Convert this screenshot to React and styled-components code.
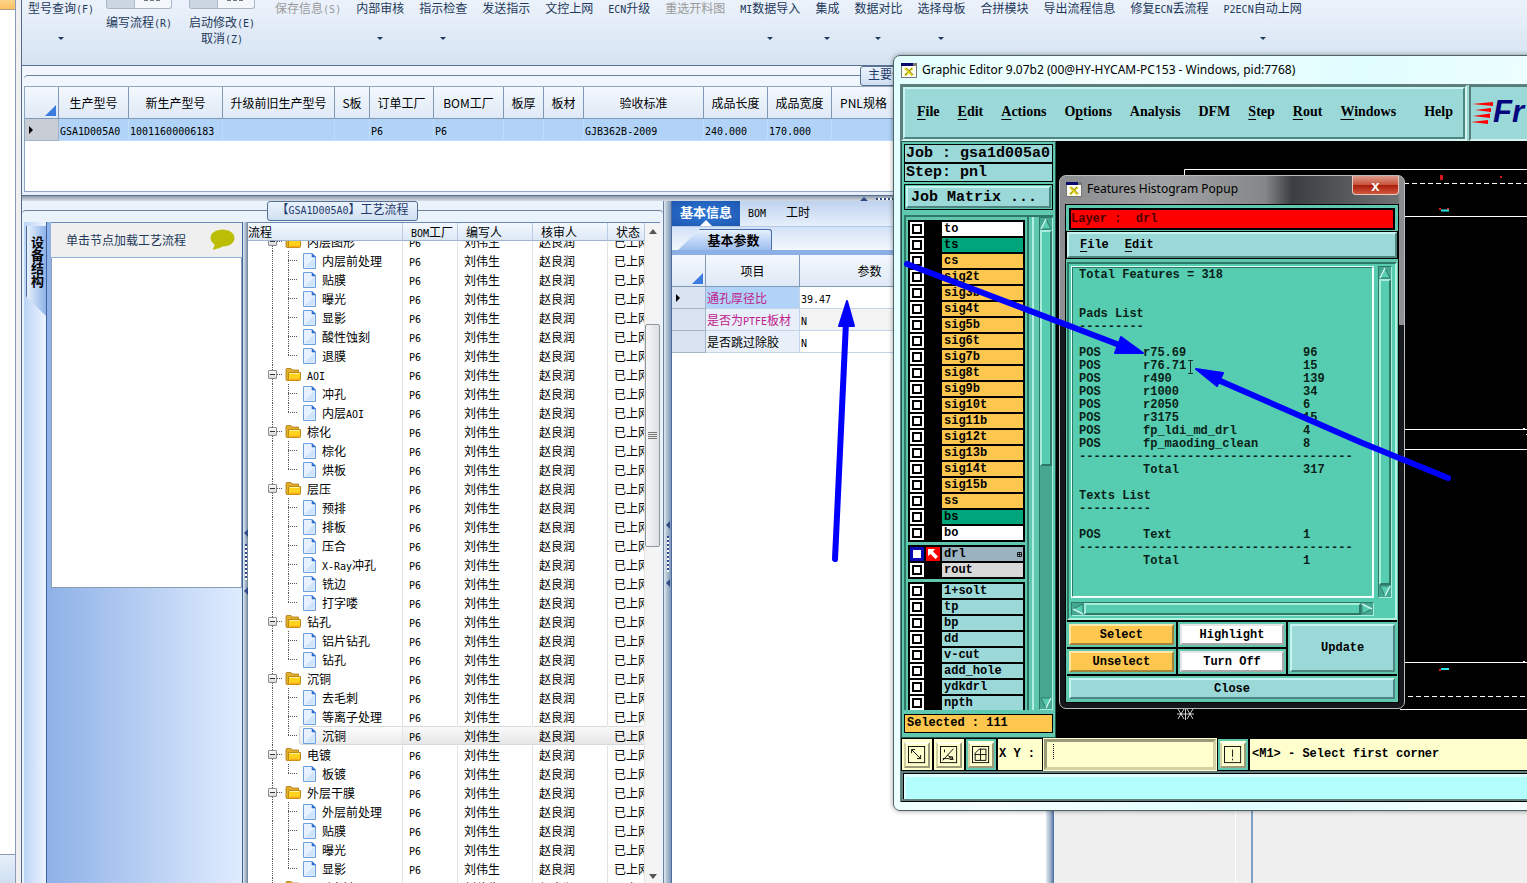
import React from 'react';
import styled, { createGlobalStyle, css } from 'styled-components';

const GlobalStyle = createGlobalStyle`
    * {
        box-sizing: border-box;
    }
    body {
        margin: 0;
        overflow: hidden;
        font-family: "Liberation Sans", "Noto Sans CJK SC", sans-serif;
        font-size: 12px;
        color: #000;
    }
    button, input {
        margin: 0;
        padding: 0;
        border: 0;
        border-radius: 0;
        background: none;
        font: inherit;
        color: inherit;
    }
    table {
        border-collapse: separate;
        border-spacing: 0;
        table-layout: fixed;
    }
    th, td {
        padding: 0;
        text-align: left;
        font-weight: inherit;
        white-space: nowrap;
        overflow: hidden;
    }
`;

/* ---------- mixed chinese / half width text ---------- */

const Half = styled.span`
    font-family: "DejaVu Sans Mono", monospace;
    font-size: 10px;
    line-height: 1;
`;

const Song = ({ children }) =>
    children
        .split(/([\x20-\x7e]+)/)
        .filter(Boolean)
        .map((part, i) => (/^[\x20-\x7e]/.test(part) ? <Half key={i}>{part}</Half> : part));

/* ---------- page ---------- */

const Page = styled.div`
    position: relative;
    display: flex;
    width: 100vw;
    height: 100vh;
    overflow: hidden;
    background: #f0f0f0;
    font-family: "Noto Sans CJK SC", sans-serif;
`;

const Dock = styled.div`
    flex: 0 0 16px;
    display: flex;
    flex-direction: column;
    justify-content: space-between;
    background: #fff;
    border-right: 1px solid #8b9bb3;
`;

const DockActive = styled.div`
    height: 10px;
    background: linear-gradient(#fcd48a, #fdc163);
    border-bottom: 1px solid #a99f84;
`;

const DockFoot = styled.div`
    height: 29px;
    background: linear-gradient(#e6effa, #cfdff2);
    border-top: 1px solid #8b9bb3;
`;

const Main = styled.div`
    flex: 1;
    min-width: 0;
    display: flex;
    flex-direction: column;
    margin-left: 5px;
    border-left: 1px solid #566a88;
`;

/* ---------- ribbon ---------- */

const Ribbon = styled.div`
    flex: 0 0 66px;
    display: flex;
    align-items: flex-start;
    gap: 15px;
    padding-left: 6px;
    background: linear-gradient(#ecf2fb, #d5e3f2);
    border-bottom: 1px solid #5a7090;
`;

const RibbonItem = styled.button`
    flex: 0 0 auto;
    display: flex;
    flex-direction: column;
    align-items: center;
    width: ${p => (p.$width ? `${p.$width}px` : 'auto')};
    color: ${p => (p.disabled ? '#9a9a9a' : '#1e395b')};
    line-height: 16px;
    white-space: nowrap;
`;

const Caret = styled.i`
    margin-top: 21px;
    border: 3px solid transparent;
    border-top-color: #1e395b;
    border-bottom: 0;
`;

const RibbonPicture = styled.span`
    flex: 0 0 auto;
    display: flex;
    justify-content: flex-end;
    width: 66px;
    height: 9px;
    margin-bottom: 5px;
    background: linear-gradient(90deg, #ccd6e1 27px, #aebccd 27px, #aebccd 28px, #f3f7fc 28px);
    border: 1px solid #a9b6c6;
    border-top: 0;
    border-radius: 0 0 3px 3px;
`;

const RibbonDashes = styled.span`
    width: 16px;
    height: 1px;
    margin-right: 11px;
    background: repeating-linear-gradient(90deg, #6c7684 0 4px, transparent 4px 6px);
`;

const ribbonItems = [
    { text: '型号查询(F)', caret: true },
    { text: '编写流程(R)', picture: true, width: 60 },
    { text: '启动修改(E)', second: '取消(Z)', picture: true, width: 76 },
    { text: '保存信息(S)', disabled: true },
    { text: '内部审核', caret: true },
    { text: '指示检查', caret: true },
    { text: '发送指示' },
    { text: '文控上网' },
    { text: 'ECN升级' },
    { text: '重选开料图', disabled: true },
    { text: 'MI数据导入', caret: true },
    { text: '集成', caret: true },
    { text: '数据对比', caret: true },
    { text: '选择母板', caret: true },
    { text: '合拼模块' },
    { text: '导出流程信息' },
    { text: '修复ECN丢流程' },
    { text: 'P2ECN自动上网', caret: true },
];

/* ---------- group panels ---------- */

const Legend = styled.div`
    flex: 0 0 ${p => p.$height}px;
    display: flex;
    color: #1f3a6b;
`;

const LegendLine = styled.div`
    flex: ${p => p.$flex || '1'};
    height: 11px;
    margin-top: 9px;
    border-top: 1px solid #6d819c;
    border-top-left-radius: ${p => (p.$left ? 4 : 0)}px;
    border-top-right-radius: ${p => (p.$right ? 4 : 0)}px;
`;

const LegendTab = styled.div`
    width: ${p => p.$width}px;
    height: 20px;
    padding: 0 6px;
    line-height: 14px;
    text-align: center;
    white-space: nowrap;
    background: linear-gradient(#eaf3fd, #cfdff2);
    border: 1px solid #566f92;
    border-radius: 3px;
`;

const TopPanel = styled.section`
    flex: 0 0 130px;
    display: flex;
    flex-direction: column;
    padding: 0 2px 3px;
    background: linear-gradient(#f2f7fd, #e6effa);
    border-bottom: 1px solid #566f92;
`;

const GridBox = styled.div`
    flex: 1;
    min-height: 0;
    background: #fff;
    border: 1px solid #8fa6c2;
`;

const Grid = styled.table`
    width: 100%;
`;

const HeadCell = styled.th`
    height: 32px;
    text-align: center;
    background: linear-gradient(#f4f8fd, #dfe9f6);
    border-right: 1px solid #7f99b8;
    border-bottom: 1px solid #7f99b8;
`;

const CornerCell = styled(HeadCell)`
    vertical-align: bottom;
    text-align: right;
    line-height: 0;
`;

const Corner = styled.i`
    display: inline-block;
    width: 0;
    height: 0;
    margin: 0 2px 2px 0;
    border-left: 11px solid transparent;
    border-bottom: 11px solid #3b7be0;
`;

const Cell = styled.td`
    height: 22px;
    padding-left: 1px;
    line-height: 20px;
    color: ${p => p.$color || '#000'};
    background: ${p => p.$bg || '#b0d3f7'};
    border-right: 1px solid ${p => p.$line || '#bfdcfa'};
    border-bottom: 1px solid ${p => p.$line || '#bfdcfa'};
`;

const IndicatorCell = styled(Cell)`
    padding-left: 4px;
    background: ${p => p.$bg || '#c8ccd4'};
    border-color: #a3b4ca;
`;

const Pointer = styled.i`
    display: block;
    width: 0;
    height: 0;
    border: 4px solid transparent;
    border-left-color: #000;
    border-right: 0;
`;

const HSplitter = styled.div`
    flex: 0 0 5px;
    display: flex;
    align-items: center;
    gap: 8px;
    padding-left: 838px;
    background: linear-gradient(#8f9aa8, #d5dde6);
`;

const UpMark = styled.i`
    border: 4px solid transparent;
    border-bottom-color: #2f4a86;
    border-top: 0;
`;

const HDots = styled.i`
    width: 60px;
    height: 2px;
    background: repeating-linear-gradient(90deg, #2f4a86 0 2px, #fff 2px 4px);
`;

const Lower = styled.div`
    flex: 1;
    min-height: 0;
    display: flex;
`;

const VSplitter = styled.div`
    flex: 0 0 ${p => p.$width}px;
    display: flex;
    flex-direction: column;
    align-items: center;
    gap: 7px;
    padding-top: ${p => p.$top}px;
    background: linear-gradient(90deg, #dfe9f2, #a9bccd 50%, ${p => p.$end});
`;

const LeftMark = styled.i`
    border: 4px solid transparent;
    border-right-color: #2f4a86;
    border-left: 0;
`;

const VDots = styled.i`
    width: 2px;
    height: 36px;
    background: repeating-linear-gradient(#2f4a86 0 2px, #fff 2px 4px);
`;

const Marks = () => (
    <>
        <LeftMark />
        <VDots />
        <LeftMark />
    </>
);

/* ---------- process panel ---------- */

const ProcessPanel = styled.section`
    flex: 0 0 642px;
    display: flex;
    flex-direction: column;
    background: #eaf2fc;
    border-right: 1px solid #6d819c;
`;

const ProcessBody = styled.div`
    flex: 1;
    min-height: 0;
    display: flex;
    padding: 0 3px 0 2px;
`;

const SideTabs = styled.div`
    flex: 0 0 22px;
    padding: 4px 0 0 2px;
    background: linear-gradient(90deg, #bcd4f7, #edf4fe);
`;

const SideTab = styled.button`
    display: flex;
    align-items: flex-end;
    width: 20px;
    height: 90px;
    padding: 10px 0 0 3px;
    font-size: 13px;
    font-weight: bold;
    line-height: 14px;
    writing-mode: vertical-rl;
    background: linear-gradient(90deg, #e8f1fd, #8db2e8);
    border-left: 1px solid #4a6a9c;
    clip-path: polygon(0 0, 100% 0, 100% 100%, 0 78%);
`;

const Structure = styled.div`
    flex: 0 0 197px;
    padding-left: 4px;
    background: linear-gradient(90deg, #8eb1e7, #dfecfe);
    border-left: 1px solid #3f639c;
    border-right: 1px solid #3f639c;
`;

const StructureHead = styled.div`
    display: flex;
    align-items: center;
    justify-content: space-between;
    height: 36px;
    padding: 0 7px 2px 15px;
    color: #1e395b;
    background: #efefef;
    border-top: 1px solid #6a8ab8;
    border-bottom: 1px solid #8fb0d8;
`;

const StructureBox = styled.div`
    height: 330px;
    background: #fff;
    border: 1px solid #8d9db5;
    border-top: 0;
`;

const TreeArea = styled.div`
    flex: 1;
    min-width: 0;
    display: flex;
    background: #fff;
    border-top: 1px solid #6a8ab8;
`;

const TreeScroll = styled.div`
    flex: 1;
    min-width: 0;
    overflow: hidden;
`;

const Tree = styled.table`
    width: 100%;
`;

const TreeHead = styled.th`
    position: sticky;
    top: 0;
    z-index: 1;
    height: 18px;
    padding-left: ${p => p.$pad}px;
    line-height: 16px;
    background: linear-gradient(#f3f8fe, #dde8f5);
    border-right: 1px solid #b9cbe2;
    border-bottom: 1px solid #9db4d2;
`;

const TreeCell = styled.td`
    height: 19px;
    padding-left: ${p => p.$pad || 0}px;
    line-height: 17px;
    text-overflow: clip;
    border-right: 1px solid #e3e3e3;
    ${p => p.$selected && css`
        background: linear-gradient(#fafafa, #e6e6e6);
        border-right-color: transparent;
        box-shadow: inset 0 1px #d9d9d9, inset 0 -1px #d9d9d9;
    `}
`;

const dots = '#555 0 1px, transparent 1px 2px';

const Node = styled.div`
    display: flex;
    align-items: center;
    height: 19px;
`;

const Trunk = styled.span`
    display: flex;
    align-items: center;
    justify-content: flex-end;
    width: 29px;
    height: 19px;
    background: repeating-linear-gradient(${dots}) 24px 0 / 1px 100% no-repeat;
`;

const Toggle = styled.button`
    width: 9px;
    height: 9px;
    background: linear-gradient(#333, #333) center / 5px 1px no-repeat, linear-gradient(#fff, #d8d8d8);
    border: 1px solid #8c8c8c;
    border-radius: 1px;
`;

const Dash = styled.span`
    width: 8px;
    height: 1px;
    background: repeating-linear-gradient(90deg, ${dots}) 0 0 / 5px 1px no-repeat;
`;

const Branch = styled.span`
    width: 22px;
    height: 19px;
    background:
        repeating-linear-gradient(${dots}) 11px 0 / 1px ${p => (p.$last ? '10px' : '100%')} no-repeat,
        repeating-linear-gradient(90deg, ${dots}) 11px 9px / 10px 1px no-repeat;
`;

const NodeText = styled.span`
    flex: 1;
    display: flex;
    align-items: center;
    gap: 5px;
    height: 19px;
    padding-left: ${p => (p.$leaf ? 3 : 0)}px;
    ${p => p.$selected && css`
        background: linear-gradient(#fdfdfd, #eaeaea);
        border: 1px solid #d9d9d9;
        border-right: 0;
        border-radius: 3px 0 0 3px;
        padding-left: 2px;
    `}
`;

const NodeLabel = styled.span`
    line-height: 17px;
`;

const ScrollBar = styled.div`
    flex: 0 0 15px;
    display: flex;
    flex-direction: column;
    align-items: center;
    background: #f4f4f4;
`;

const ScrollArrow = styled.i`
    margin: ${p => (p.$down ? 'auto 0 4px' : '6px 0 90px')};
    border: 4px solid transparent;
    ${p => (p.$down
        ? 'border-top: 5px solid #555; border-bottom: 0;'
        : 'border-bottom: 5px solid #555; border-top: 0;')}
`;

const ScrollThumb = styled.div`
    display: flex;
    align-items: center;
    justify-content: center;
    width: 15px;
    height: 223px;
    background: linear-gradient(90deg, #f7f7f7, #dcdfe4);
    border: 1px solid #8f979f;
    border-radius: 2px;
`;

const Grip = styled.i`
    width: 9px;
    height: 7px;
    background: repeating-linear-gradient(#777 0 1px, transparent 1px 2px);
`;

const FolderIcon = () => (
    <svg width="17" height="15" viewBox="0 0 17 15">
        <path d="M1 2.5Q1 1.5 2 1.5H6L7.500 3H13.500V6H4V13.500H2Q1 13.500 1 12.500Z" fill="#e0ae2c" stroke="#a97a14" strokeWidth=".8" />
        <path d="M3.500 5.500H15.500V12.500Q15.500 13.500 14.500 13.500H3.500Z" fill="#ffd21c" stroke="#c08a12" />
        <path d="M4.500 6.500H14.500" stroke="#fff2a0" />
        <path d="M5 12.500H15" stroke="#f8a81c" strokeWidth="1.500" />
    </svg>
);

const PageIcon = () => (
    <svg width="15" height="16" viewBox="0 0 15 16">
        <path d="M1.500 .5H10L13.500 4V15.500H1.500Z" fill="#e7f2fe" stroke="#6da0de" />
        <path d="M3 14L12.500 5V14.500H3Z" fill="#cfe4fb" />
        <path d="M10 .5V4H13.500Z" fill="#2d6fd2" stroke="#2d6fd2" strokeWidth=".6" />
    </svg>
);

const BubbleIcon = () => (
    <svg width="25" height="21" viewBox="0 0 25 21">
        <path d="M12.500 0.500C19 .5 24.500 4 24.500 9S19 17.500 12.500 17.500C10.500 18.500 6 20.500 2.500 20.500C4 18.500 4.500 17 4.500 15.500C2 13.800 .5 11.500 .5 9C.5 4 6 .5 12.500 .5Z" fill="#bcbe05" />
    </svg>
);

const processes = [
    ['内层图形', ['内层前处理', '贴膜', '曝光', '显影', '酸性蚀刻', '退膜']],
    ['AOI', ['冲孔', '内层AOI']],
    ['棕化', ['棕化', '烘板']],
    ['层压', ['预排', '排板', '压合', 'X-Ray冲孔', '铣边', '打字喽']],
    ['钻孔', ['铝片钻孔', '钻孔']],
    ['沉铜', ['去毛刺', '等离子处理', '沉铜']],
    ['电镀', ['板镀']],
    ['外层干膜', ['外层前处理', '贴膜', '曝光', '显影']],
    ['图形电镀', []],
];

const treeRows = processes.flatMap(([name, steps]) => [
    { name },
    ...steps.map((step, i) => ({
        name: step,
        leaf: true,
        last: i === steps.length - 1,
        selected: name === '沉铜' && step === '沉铜',
    })),
]);

const scrollTree = el => {
    if (el) el.scrollTop = 9;
};

const ProcessTree = () => (
    <TreeArea>
        <TreeScroll ref={scrollTree}>
            <Tree>
                <colgroup>
                    <col width="155" />
                    <col width="55" />
                    <col width="75" />
                    <col width="75" />
                    <col />
                </colgroup>
                <thead>
                    <tr>
                        <TreeHead $pad={0}>流程</TreeHead>
                        <TreeHead $pad={8}><Song>BOM工厂</Song></TreeHead>
                        <TreeHead $pad={8}>编写人</TreeHead>
                        <TreeHead $pad={8}>核审人</TreeHead>
                        <TreeHead $pad={8}>状态</TreeHead>
                    </tr>
                </thead>
                <tbody>
                    {treeRows.map((row, i) => (
                        <tr key={i}>
                            <TreeCell>
                                <Node>
                                    <Trunk>{!row.leaf && <Toggle aria-label={row.name} />}</Trunk>
                                    {row.leaf ? <Branch $last={row.last} /> : <Dash />}
                                    <NodeText $leaf={row.leaf} $selected={row.selected}>
                                        {row.leaf ? <PageIcon /> : <FolderIcon />}
                                        <NodeLabel><Song>{row.name}</Song></NodeLabel>
                                    </NodeText>
                                </Node>
                            </TreeCell>
                            <TreeCell $pad={6} $selected={row.selected}><Half>P6</Half></TreeCell>
                            <TreeCell $pad={6} $selected={row.selected}>刘伟生</TreeCell>
                            <TreeCell $pad={6} $selected={row.selected}>赵良润</TreeCell>
                            <TreeCell $pad={6} $selected={row.selected}>已上网</TreeCell>
                        </tr>
                    ))}
                </tbody>
            </Tree>
        </TreeScroll>
        <ScrollBar>
            <ScrollArrow />
            <ScrollThumb><Grip /></ScrollThumb>
            <ScrollArrow $down />
        </ScrollBar>
    </TreeArea>
);

/* ---------- parameter panel ---------- */

const ParamPanel = styled.section`
    flex: 0 0 375px;
    background: #fff;
    border-left: 1px solid #4d6a9a;
`;

const ParamTabs = styled.div`
    display: flex;
    height: 26px;
    background: linear-gradient(#bfd3ee, #e6effb);
    border-bottom: 1px solid #b4c9e6;
`;

const ParamTab = styled.button`
    position: relative;
    padding: 0 ${p => p.$pad}px 4px;
    ${p => p.$active && css`
        width: 68px;
        padding: 0 0 4px;
        color: #fff;
        font-size: 13px;
        font-weight: bold;
        background: radial-gradient(#2f7ad6, #1c55b0);
        &::after {
            content: "";
            position: absolute;
            left: 28px;
            bottom: 0;
            border: 6px solid transparent;
            border-bottom-color: #fff;
            border-top: 0;
        }
    `}
`;

const SubTabs = styled.div`
    height: 28px;
    padding: 2px 0 0 6px;
    background: linear-gradient(#d3e2f8, #f4f8fe);
    border-bottom: 5px solid #8cb0e6;
`;

const SubTab = styled.button`
    display: block;
    width: 94px;
    height: 21px;
    padding-left: 18px;
    font-size: 13px;
    font-weight: bold;
    line-height: 18px;
    background: linear-gradient(#e6f0fd, #9dbdee);
    border-top: 1px solid #4a6fa8;
    border-right: 1px solid #4a6fa8;
    border-radius: 0 3px 0 0;
    clip-path: polygon(22px 0, 100% 0, 100% 100%, 0 100%);
`;

const EmptyPanel = styled.div`
    flex: 1;
    display: flex;
    background: #efefef;
`;

const EmptyColumn = styled.div`
    flex: 0 0 ${p => p.$width}px;
    border-right: ${p => p.$line};
`;

/* ---------- motif style windows ---------- */

const mono = css`
    font-family: "Liberation Mono", monospace;
    font-size: 12px;
    font-weight: bold;
`;

const raised = css`
    border: 2px solid;
    border-color: ${p => p.$light || '#c6f4f0'} ${p => p.$dark || '#4d8580'} ${p => p.$dark || '#4d8580'} ${p => p.$light || '#c6f4f0'};
`;

const sunken = css`
    border: 2px solid;
    border-color: #587c7a #d5f3ef #d5f3ef #587c7a;
`;

const Win = styled.div`
    position: absolute;
    left: 893px;
    right: -16px;
    top: 55px;
    bottom: 72px;
    display: flex;
    flex-direction: column;
    padding: 0 8px 8px 6px;
    background: linear-gradient(100deg, #e2ffff, #f6ffff 30%, #e0fdff 60%, #f8ffff);
    border: 1px solid #4c6668;
    border-radius: 7px;
    box-shadow: 0 0 5px rgba(0, 0, 0, 0.4);
`;

const TitleBar = styled.div`
    flex: 0 0 28px;
    display: flex;
    align-items: center;
    gap: 5px;
    padding-left: 1px;
    font-family: "Noto Sans", "Open Sans", sans-serif;
    font-size: 12px;
    line-height: 20px;
    white-space: nowrap;
`;

const WindowIcon = () => (
    <svg width="16" height="15" viewBox="0 0 16 15">
        <rect x=".5" y=".5" width="15" height="14" fill="#fffef2" stroke="#777" />
        <rect width="12" height="3" fill="#08086c" />
        <rect x="12" width="4" height="3" fill="#777" />
        <path d="M4 5L11.500 12.500M11.500 5L4 12.500" stroke="#dfd21a" strokeWidth="2.200" />
        <path d="M5.500 5L12.500 12M11 5L8.500 7.500M6.500 9.500L4 12" stroke="#67631a" strokeWidth=".7" />
    </svg>
);

const WinBody = styled.div`
    flex: 1;
    min-height: 0;
    display: flex;
    flex-direction: column;
    background: #000;
    border: 1px solid #62807f;
`;

const MenuRow = styled.div`
    flex: 0 0 56px;
    display: flex;
    gap: 2px;
    background: #9bd9d9;
`;

const MenuFrame = styled.div`
    flex: 0 0 566px;
    display: flex;
    ${sunken}
`;

const Menu = styled.nav`
    flex: 1;
    display: flex;
    align-items: center;
    gap: 18px;
    padding: 0 10px 2px 12px;
    font-family: "Liberation Serif", serif;
    font-size: 14px;
    font-weight: bold;
    ${raised}
`;

const MenuItem = styled.button`
    margin-left: ${p => (p.$last ? 'auto' : 0)};
    u {
        text-underline-offset: 3px;
    }
`;

const LogoFrame = styled.div`
    flex: 1;
    display: flex;
    align-items: center;
    overflow: hidden;
    ${sunken}
`;

const LogoText = styled.span`
    padding-bottom: 2px;
    font-family: "Liberation Sans", sans-serif;
    font-size: 31px;
    font-weight: bold;
    font-style: italic;
    color: #06067e;
`;

const SpeedLines = () => (
    <svg width="22" height="24" viewBox="0 0 22 24">
        <path d="M1 3L22 1V5ZM4 9L20 7V11ZM2 15L19 12.500V17ZM0 21L17 19V23Z" fill="#f00" />
    </svg>
);

const Work = styled.div`
    flex: 1;
    min-height: 0;
    display: flex;
`;

const JobPanel = styled.aside`
    flex: 0 0 155px;
    display: flex;
    flex-direction: column;
    padding: 2px 2px 4px;
    background: #5fc8ae;
    border: 1px solid #26564c;
`;

const JobLine = styled.div`
    flex: 0 0 19px;
    padding-left: 1px;
    font-family: "Liberation Mono", monospace;
    font-size: 15px;
    font-weight: bold;
    line-height: 17px;
    background: #9bd9d9;
    border: 1px solid #000;
    white-space: nowrap;
    overflow: hidden;
`;

const MatrixFrame = styled.div`
    flex: 0 0 26px;
    display: flex;
    margin: 2px 0 5px;
    padding: 1px;
    border: 1px solid #000;
`;

const MatrixButton = styled.button`
    flex: 1;
    padding-left: 3px;
    font-family: "Liberation Mono", monospace;
    font-size: 15px;
    font-weight: bold;
    text-align: left;
    line-height: 17px;
    background: #9bd9d9;
    ${raised}
`;

const LayerArea = styled.div`
    flex: 1;
    min-height: 0;
    display: flex;
    padding-left: 2px;
    border-top: 2px solid #2e7866;
    border-left: 2px solid #2e7866;
`;

const LayerList = styled.div`
    flex: 0 0 117px;
    display: flex;
    flex-direction: column;
    gap: 3px;
    padding-top: 3px;
    overflow: hidden;
`;

const LayerGroup = styled.div`
    flex: 0 0 auto;
    background: #000;
    border: 1px solid #000;
`;

const LayerRow = styled.label`
    display: flex;
    align-items: center;
    gap: 2px;
    height: 16px;
    padding: 0 1px;
`;

const LayerCheck = styled.input`
    appearance: none;
    width: 14px;
    height: 14px;
    background: #fff;
    border: 2px solid #fff;
    box-shadow: inset 0 0 0 2px #000;
    &:checked {
        border-color: #0a0ab4;
        box-shadow: inset 0 0 0 1px #0a0ab4;
    }
`;

const LayerSlot = styled.span`
    display: flex;
    width: 14px;
    height: 14px;
    background: ${p => (p.$on ? '#f00' : '#000')};
`;

const LayerName = styled.span`
    ${mono}
    flex: 1;
    display: flex;
    align-items: center;
    justify-content: space-between;
    height: 14px;
    padding: 0 1px 0 2px;
    line-height: 13px;
    background: ${p => p.$bg};
`;

const Furrow = styled.div`
    flex: 0 0 10px;
    margin: 0 2px;
    background: linear-gradient(90deg, #2e7866 2px, #5fc8ae 2px, #5fc8ae 5px, #b4f0e0 5px, #b4f0e0 7px, #5fc8ae 7px);
`;

const Trough = styled.div`
    flex: 0 0 14px;
    display: flex;
    flex-direction: ${p => (p.$row ? 'row' : 'column')};
    align-items: stretch;
    background: #45a78f;
    border: 1px solid;
    border-color: #2e7866 #a8ecdb #a8ecdb #2e7866;
`;

const Thumb = styled.div`
    flex: ${p => p.$size};
    background: #56cdb0;
    border: 2px solid;
    border-color: #a8ecdb #2e7866 #2e7866 #a8ecdb;
`;

const turns = { up: 0, right: 90, down: 180, left: 270 };

const Tri = ({ dir }) => (
    <svg width="12" height="12" viewBox="0 0 12 12">
        <g transform={`rotate(${turns[dir]} 6 6)`}>
            <path d="M6 1L11 11H1Z" fill="#56cdb0" stroke="#2e7866" />
            <path d="M6 1L1 11" stroke="#c9f7ea" strokeWidth="1.500" />
        </g>
    </svg>
);

const Spring = styled.div`
    flex: 1;
`;

const Selected = styled.div`
    ${mono}
    flex: 0 0 19px;
    margin-top: 4px;
    padding-left: 2px;
    line-height: 16px;
    background: #fdc64f;
    border: 1px solid #000;
`;

const Canvas = styled.div`
    flex: 1;
    min-width: 0;
    overflow: hidden;
    background: #000;
`;

const CanvasDrawing = () => (
    <svg width="471" height="597" viewBox="1056 141 471 597" fill="none" stroke="#fff">
        <path d="M1527 169.500H1184.500V175M1404 216.500H1527M1405 429.500H1527M1405 449.500H1527M1405 662.500H1527M1400 709.500H1527" />
        <path d="M1404 183.500H1527M1408 696.500H1527" strokeDasharray="5 3" />
        <path d="M1523 428.500H1525M1526 434.500H1527M1523 661.500H1525" />
        <path d="M1440 175H1443V180H1440ZM1500 176H1502V178H1500ZM1439 208H1441V210H1439ZM1447 208H1449V210H1447ZM1439 669H1441V671H1439Z" fill="#d81818" stroke="none" />
        <path d="M1441 210.500H1449M1441 669H1449" stroke="#2ee6e6" strokeWidth="2" />
        <path d="M1177 714H1194M1185.500 708V720M1178 709L1184 719M1184 709L1178 719M1187 709L1193 719M1193 709L1187 719" strokeWidth=".8" />
    </svg>
);

const ToolRow = styled.div`
    flex: 0 0 33px;
    display: flex;
    align-items: stretch;
    gap: 2px;
    padding: 1px 0 1px 1px;
    background: #000;
`;

const ToolButton = styled.button`
    flex: 0 0 30px;
    display: flex;
    align-items: center;
    justify-content: center;
    background: #ffffcd;
    border: 2px solid ${p => (p.$on ? '#5fc8ae' : '#ffffcd')};
    svg {
        padding: 2px;
        border: 2px solid;
        border-color: #fffff0 #9c9a78 #9c9a78 #d3d1a5;
    }
`;

const XYLabel = styled.label`
    ${mono}
    flex: 0 0 44px;
    padding-left: 1px;
    line-height: 30px;
    background: #ffffcd;
    white-space: nowrap;
`;

const XYInput = styled.input`
    ${mono}
    flex: 0 0 172px;
    padding-left: 4px;
    background: #ffffcd;
    border: 3px solid;
    border-color: #9c9a78 #d3d1a5 #d3d1a5 #9c9a78;
    outline: 1px solid #ffffcd;
`;

const Message = styled.div`
    ${mono}
    flex: 1;
    padding-left: 2px;
    line-height: 30px;
    background: #ffffcd;
    white-space: nowrap;
    overflow: hidden;
`;

const StatusBar = styled.div`
    flex: 0 0 30px;
    background: #b3fffd;
    border: 2px solid;
    border-color: #62807f #b3fffd #62807f #62807f;
    box-shadow: inset 1px 1px #000, inset 3px 4px #dbfffe, 0 1px #000;
`;

const layerGroups = [
    [
        ['to', '#fff'],
        ['ts', '#00a57c'],
        ...['cs', 'sig2t', 'sig3b', 'sig4t', 'sig5b', 'sig6t', 'sig7b', 'sig8t', 'sig9b', 'sig10t', 'sig11b',
            'sig12t', 'sig13b', 'sig14t', 'sig15b', 'ss'].map(name => [name, '#fdc64f']),
        ['bs', '#00a57c'],
        ['bo', '#fff'],
    ],
    [
        ['drl', '#9bb3bf'],
        ['rout', '#d9d9d9'],
    ],
    ['1+solt', 'tp', 'bp', 'dd', 'v-cut', 'add_hole', 'ydkdrl', 'npth'].map(name => [name, '#9bd9d9']),
];

const menuItems = [
    ['F', 'ile'], ['E', 'dit'], ['A', 'ctions'], ['p', 'tions', 'O'], ['', 'Analysis'], ['', 'DFM'],
    ['S', 'tep'], ['R', 'out'], ['W', 'indows'], ['', 'Help'],
];

const ToolGlyph = ({ d }) => (
    <svg width="26" height="26" viewBox="0 0 20 20" fill="none" stroke="#000">
        <rect x=".5" y=".5" width="18" height="18" />
        <path d={d} />
    </svg>
);

/* ---------- histogram popup ---------- */

const Popup = styled.div`
    position: absolute;
    left: 1059px;
    top: 175px;
    width: 346px;
    display: flex;
    flex-direction: column;
    padding: 0 5px 5px;
    background: linear-gradient(#8d8f90, #898b8c 5%, #8f9192 28%, #16191d 28%, #14161b);
    border: 1px solid #b9bdbf;
    border-radius: 7px;
`;

const PopupTitle = styled(TitleBar)`
    align-items: flex-start;
    padding: 3px 0 0 1px;
    background: linear-gradient(90deg, #8b8d8e, #a0a2a3 30%, #848687 60%, #3b3e42 68%, #707274);
    svg {
        margin-top: 3px;
    }
`;

const CloseX = styled.button`
    width: 47px;
    height: 19px;
    margin: -3px 0 0 auto;
    color: #fff;
    font-family: "Liberation Sans", sans-serif;
    font-size: 15px;
    font-weight: bold;
    line-height: 15px;
    background: linear-gradient(#dc9c8c, #c8503a 50%, #a81c0c 50%, #d0583c);
    border: 1px solid #e9c9c0;
    border-top: 0;
    border-radius: 0 0 4px 4px;
`;

const PopupBody = styled.div`
    display: flex;
    flex-direction: column;
    padding: 1px;
    background: #5fc8ae;
    border: 1px solid #000;
`;

const LayerLine = styled.div`
    ${mono}
    height: 22px;
    margin: 2px;
    line-height: 18px;
    color: #4c0000;
    background: #f00;
    border: 2px solid #000;
    white-space: pre;
`;

const PopupMenu = styled.nav`
    ${mono}
    display: flex;
    gap: 16px;
    height: 26px;
    padding-left: 11px;
    background: #9bd9d9;
    outline: 1px solid #000;
    ${raised}
`;

const PaneFrame = styled.div`
    display: grid;
    grid-template-columns: 1fr 14px;
    gap: 4px;
    margin-top: 4px;
    padding: 2px;
    padding-right: 3px;
    background: #56cdb0;
    border: 2px solid;
    border-color: #2e7866 #b4f0e0 #b4f0e0 #2e7866;
`;

const Pane = styled.div`
    ${mono}
    height: 332px;
    padding: 1px 0 0 6px;
    line-height: 13px;
    color: #0a1f18;
    background: #56cdb0;
    border: 2px solid;
    border-color: #2e7866 #fff #fff #2e7866;
    outline: 1px solid #e8fff8;
    outline-offset: -1px;
    overflow: hidden;
`;

const Report = styled.table`
    width: 100%;
    td {
        height: 13px;
        overflow: visible;
    }
`;

const Buttons = styled.div`
    display: grid;
    grid-template-columns: 1fr 1fr 1fr;
    grid-template-rows: 25px 25px 25px;
    gap: 2px;
    padding-top: 2px;
    background: #000;
`;

const PushButton = styled.button`
    ${mono}
    grid-row: ${p => p.$row || 'auto'};
    grid-column: ${p => p.$col || 'auto'};
    background: ${p => p.$bg || '#9bd9d9'};
    ${raised}
    outline: 2px solid #5fc8ae;
    outline-offset: -2px;
    border-width: 4px;
`;

const pads = [
    ['POS', 'r75.69', '96'],
    ['POS', 'r76.71', '15'],
    ['POS', 'r490', '139'],
    ['POS', 'r1000', '34'],
    ['POS', 'r2050', '6'],
    ['POS', 'r3175', '15'],
    ['POS', 'fp_ldi_md_drl', '4'],
    ['POS', 'fp_maoding_clean', '8'],
];

const rule = '-'.repeat(38);

const reportLines = [
    ['Total Features = 318'],
    [''],
    [''],
    ['Pads List'],
    ['---------'],
    [''],
    ...pads,
    [rule],
    ['', 'Total', '317'],
    [''],
    ['Texts List'],
    ['----------'],
    [''],
    ['POS', 'Text', '1'],
    [rule],
    ['', 'Total', '1'],
];

const HistogramPopup = () => (
    <Popup>
        <PopupTitle>
            <WindowIcon />
            Features Histogram Popup
            <CloseX aria-label="Close window">x</CloseX>
        </PopupTitle>
        <PopupBody>
            <LayerLine>Layer :  drl</LayerLine>
            <PopupMenu>
                <MenuItem><u>F</u>ile</MenuItem>
                <MenuItem><u>E</u>dit</MenuItem>
            </PopupMenu>
            <PaneFrame>
                <Pane>
                    <Report>
                        <colgroup>
                            <col width="64" />
                            <col width="160" />
                            <col />
                        </colgroup>
                        <tbody>
                            {reportLines.map((line, i) => (
                                <tr key={i}>
                                    {line.map((text, j) => (
                                        <td key={j} colSpan={line.length === 1 ? 3 : 1}>{text}</td>
                                    ))}
                                </tr>
                            ))}
                        </tbody>
                    </Report>
                </Pane>
                <Trough>
                    <Tri dir="up" />
                    <Thumb $size="1" />
                    <Tri dir="down" />
                </Trough>
                <Trough $row>
                    <Tri dir="left" />
                    <Thumb $size="1" />
                    <Tri dir="right" />
                </Trough>
            </PaneFrame>
            <Buttons>
                <PushButton $bg="#fdc64f" $light="#ffe9a8" $dark="#a5843a">Select</PushButton>
                <PushButton $bg="#fff" $light="#e6e6e6" $dark="#a8a8a8">Highlight</PushButton>
                <PushButton $row="1 / 3" $col="3">Update</PushButton>
                <PushButton $bg="#fdc64f" $light="#ffe9a8" $dark="#a5843a">Unselect</PushButton>
                <PushButton $bg="#fff" $light="#e6e6e6" $dark="#a8a8a8">Turn Off</PushButton>
                <PushButton $col="1 / 4">Close</PushButton>
            </Buttons>
        </PopupBody>
    </Popup>
);

const GraphicEditor = () => (
    <Win>
        <TitleBar>
            <WindowIcon />
            Graphic Editor 9.07b2 (00@HY-HYCAM-PC153 - Windows, pid:7768)
        </TitleBar>
        <WinBody>
            <MenuRow>
                <MenuFrame>
                    <Menu>
                        {menuItems.map(([key, rest, before], i) => (
                            <MenuItem key={key + rest} $last={i === menuItems.length - 1}>
                                {before}{key && <u>{key}</u>}{rest}
                            </MenuItem>
                        ))}
                    </Menu>
                </MenuFrame>
                <LogoFrame>
                    <SpeedLines />
                    <LogoText>Fr</LogoText>
                </LogoFrame>
            </MenuRow>
            <Work>
                <JobPanel>
                    <JobLine>Job : gsa1d005a0</JobLine>
                    <JobLine>Step: pnl</JobLine>
                    <MatrixFrame>
                        <MatrixButton>Job Matrix ...</MatrixButton>
                    </MatrixFrame>
                    <LayerArea>
                        <LayerList>
                            {layerGroups.map((group, g) => (
                                <LayerGroup key={g}>
                                    {group.map(([name, bg]) => (
                                        <LayerRow key={name}>
                                            <LayerCheck type="checkbox" defaultChecked={name === 'drl'} />
                                            <LayerSlot $on={name === 'drl'}>
                                                {name === 'drl' && (
                                                    <svg width="14" height="14" viewBox="0 0 14 14">
                                                        <path d="M2 2H9L7 4.500L12 9.500L9.500 12L4.500 7L2 9Z" fill="#fff" />
                                                    </svg>
                                                )}
                                            </LayerSlot>
                                            <LayerName $bg={bg}>
                                                {name}
                                                {name === 'drl' && (
                                                    <svg width="5" height="5" viewBox="0 0 5 5" stroke="#000" fill="none">
                                                        <path d="M.5 .5H4.500V4.500H.5ZM2.500 0V5M0 2.500H5" strokeWidth=".8" />
                                                    </svg>
                                                )}
                                            </LayerName>
                                        </LayerRow>
                                    ))}
                                </LayerGroup>
                            ))}
                        </LayerList>
                        <Furrow />
                        <Trough>
                            <Tri dir="up" />
                            <Thumb $size="1" />
                            <Spring />
                            <Tri dir="down" />
                        </Trough>
                    </LayerArea>
                    <Selected>Selected : 111</Selected>
                </JobPanel>
                <Canvas>
                    <CanvasDrawing />
                </Canvas>
            </Work>
            <ToolRow>
                <ToolButton aria-label="Zoom"><ToolGlyph d="M4 4L14 14M4 8V4H8M14 10V14H10" /></ToolButton>
                <ToolButton aria-label="Origin"><ToolGlyph d="M3 16L15 3M3 14H10M5 4V7M8 10L15 15M11 12H14V15H11Z" /></ToolButton>
                <ToolButton $on aria-label="Grid"><ToolGlyph d="M3.500 16V8L8 3.500H15.500V16ZM9.500 3V16M3 9.500H16" /></ToolButton>
                <XYLabel htmlFor="xy">X Y :</XYLabel>
                <XYInput id="xy" />
                <ToolButton $on aria-label="Alert"><ToolGlyph d="M9.500 4V12M9.500 14V16" /></ToolButton>
                <Message>{'<M1> - Select first corner'}</Message>
            </ToolRow>
            <StatusBar />
        </WinBody>
    </Win>
);

/* ---------- hand drawn arrows ---------- */

const Marker = styled.svg`
    position: absolute;
    left: 0;
    top: 0;
    pointer-events: none;
`;

const Arrows = () => (
    <Marker width="1527" height="883" viewBox="0 0 1527 883">
        <g stroke="#00f" strokeWidth="6" strokeLinecap="round">
            <path d="M907 264L1122 346" />
            <path d="M1448 478L1360 442L1218 380" fill="none" />
            <path d="M835 559L846 322" />
        </g>
        <g fill="#00f" stroke="#00f" strokeWidth="2" strokeLinejoin="round">
            <path d="M1143 353L1121 337L1115 353Z" />
            <path d="M1196 369L1223 373L1217 386Z" />
            <path d="M847 301L839 326H854Z" />
        </g>
        <path d="M1188 360.500H1193M1188 373.500H1193M1190.500 361V373" stroke="#143a30" />
        <path d="M1053.500 744V759" stroke="#000" strokeDasharray="1 1" />
    </Marker>
);

const columns = [
    ['生产型号', 70, 'GSA1D005A0'],
    ['新生产型号', 94, '10011600006183'],
    ['升级前旧生产型号', 112, ''],
    ['S板', 35, ''],
    ['订单工厂', 64, 'P6'],
    ['BOM工厂', 70, 'P6'],
    ['板厚', 40, ''],
    ['板材', 40, ''],
    ['验收标准', 120, 'GJB362B-2009'],
    ['成品长度', 64, '240.000'],
    ['成品宽度', 64, '170.000'],
    ['PNL规格', 64, ''],
];

const params = [
    { name: '通孔厚径比', value: '39.47', color: '#c0208c', bg: '#b0d3f7', valueBg: '#fff', current: true },
    { name: '是否为PTFE板材', value: 'N', color: '#c0208c', bg: '#e8eff9', valueBg: '#f3f3f3' },
    { name: '是否跳过除胶', value: 'N', color: '#000', bg: '#e8eff9', valueBg: '#fff' },
];

const App = () => (
    <Page>
        <GlobalStyle />
        <Dock>
            <DockActive />
            <DockFoot />
        </Dock>
        <Main>
            <Ribbon>
                {ribbonItems.map(item => (
                    <RibbonItem key={item.text} $width={item.width} disabled={item.disabled}>
                        {item.picture && <RibbonPicture><RibbonDashes /></RibbonPicture>}
                        <span><Song>{item.text}</Song></span>
                        {item.second && <span><Song>{item.second}</Song></span>}
                        {item.caret && <Caret />}
                    </RibbonItem>
                ))}
            </Ribbon>
            <TopPanel>
                <Legend $height={20}>
                    <LegendLine $left $flex="0 0 836px" />
                    <LegendTab $width={64}>主要信息</LegendTab>
                    <LegendLine />
                </Legend>
                <GridBox>
                    <Grid>
                        <colgroup>
                            <col width="34" />
                            {columns.map(([name, width]) => <col key={name} width={width} />)}
                            <col />
                        </colgroup>
                        <thead>
                            <tr>
                                <CornerCell><Corner /></CornerCell>
                                {columns.map(([name]) => <HeadCell key={name}>{name}</HeadCell>)}
                                <HeadCell />
                            </tr>
                        </thead>
                        <tbody>
                            <tr>
                                <IndicatorCell><Pointer /></IndicatorCell>
                                {columns.map(([name, , value]) => <Cell key={name}><Half>{value}</Half></Cell>)}
                                <Cell />
                            </tr>
                        </tbody>
                    </Grid>
                </GridBox>
            </TopPanel>
            <HSplitter>
                <UpMark />
                <HDots />
            </HSplitter>
            <Lower>
                <ProcessPanel>
                    <Legend $height={21}>
                        <LegendLine $left />
                        <LegendTab $width={151}><Song>【GSA1D005A0】工艺流程</Song></LegendTab>
                        <LegendLine $right />
                    </Legend>
                    <ProcessBody>
                        <SideTabs>
                            <SideTab>设备结构</SideTab>
                        </SideTabs>
                        <Structure>
                            <StructureHead>
                                单击节点加载工艺流程
                                <BubbleIcon />
                            </StructureHead>
                            <StructureBox />
                        </Structure>
                        <VSplitter $width={5} $top={307} $end="#6d7f95"><Marks /></VSplitter>
                        <ProcessTree />
                    </ProcessBody>
                </ProcessPanel>
                <VSplitter $width={7} $top={320} $end="#7f99bd"><Marks /></VSplitter>
                <ParamPanel>
                    <ParamTabs>
                        <ParamTab $active>基本信息</ParamTab>
                        <ParamTab $pad={8}><Song>BOM</Song></ParamTab>
                        <ParamTab $pad={12}>工时</ParamTab>
                    </ParamTabs>
                    <SubTabs>
                        <SubTab>基本参数</SubTab>
                    </SubTabs>
                    <Grid>
                        <colgroup>
                            <col width="34" />
                            <col width="94" />
                            <col width="140" />
                            <col />
                        </colgroup>
                        <thead>
                            <tr>
                                <CornerCell><Corner /></CornerCell>
                                <HeadCell>项目</HeadCell>
                                <HeadCell>参数</HeadCell>
                                <HeadCell />
                            </tr>
                        </thead>
                        <tbody>
                            {params.map(row => (
                                <tr key={row.name}>
                                    <IndicatorCell $bg="#d9e3f1">{row.current && <Pointer />}</IndicatorCell>
                                    <Cell $bg={row.bg} $color={row.color} $line="#c3d3e8"><Song>{row.name}</Song></Cell>
                                    <Cell $bg={row.valueBg} $line="#c3d3e8"><Half>{row.value}</Half></Cell>
                                    <Cell $bg={row.valueBg} $line="#c3d3e8" />
                                </tr>
                            ))}
                        </tbody>
                    </Grid>
                </ParamPanel>
                <VSplitter $width={8} $top={0} $end="#4a6ba5" />
                <EmptyPanel>
                    <EmptyColumn $width={182} $line="1px solid #fff" />
                    <EmptyColumn $width={17} $line="2px solid #7f9fc5" />
                </EmptyPanel>
            </Lower>
        </Main>
        <GraphicEditor />
        <HistogramPopup />
        <Arrows />
    </Page>
);

export default App;
